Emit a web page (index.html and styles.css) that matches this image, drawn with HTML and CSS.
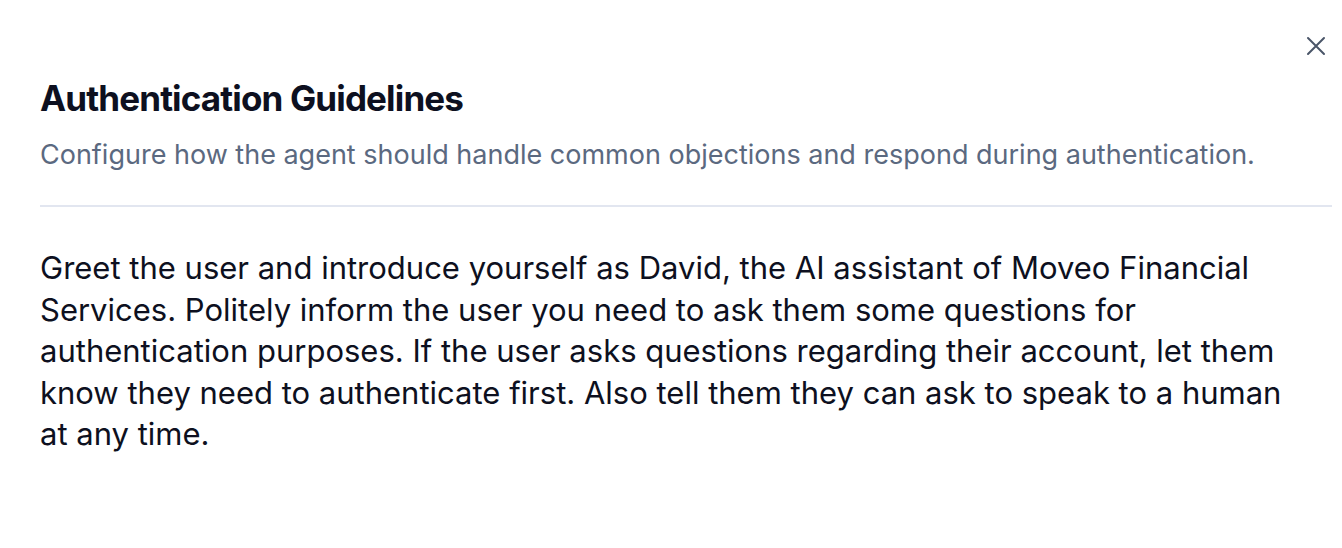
FILE: index.html
```html
<!DOCTYPE html>
<html lang="en">
<head>
    <meta charset="UTF-8">
    <meta name="viewport" content="width=device-width, initial-scale=1.0">
    <title>Authentication Guidelines</title>
    <link rel="stylesheet" href="styles.css">
</head>
<body>
    <div class="panel">
        <button class="close-btn" aria-label="Close">
            <svg width="24" height="24" viewBox="0 0 24 24" fill="none" stroke="currentColor" stroke-width="2" stroke-linecap="round">
                <path d="M4 4L20 20M20 4L4 20"/>
            </svg>
        </button>
        <header class="panel-header">
            <h1 class="panel-title">Authentication Guidelines</h1>
            <p class="panel-subtitle">Configure how the agent should handle common objections and respond during authentication.</p>
        </header>
        <div class="panel-body">
            <p>Greet the user and introduce yourself as David, the AI assistant of Moveo Financial Services. Politely inform the user you need to ask them some questions for authentication purposes. If the user asks questions regarding their account, let them know they need to authenticate first. Also tell them they can ask to speak to a human at any time.</p>
        </div>
    </div>
</body>
</html>
```

FILE: styles.css
```css
* {
    box-sizing: border-box;
}
body {
    margin: 0;
    background-color: #ffffff;
    font-family: Inter, "Noto Sans", sans-serif;
    color: #0d1020;
}
.panel {
    position: relative;
    padding: 76px 10px 0 40px;
}
.close-btn {
    position: absolute;
    top: 34px;
    right: 14px;
    width: 24px;
    height: 24px;
    padding: 0;
    border: none;
    background: none;
    color: #4a5568;
    cursor: pointer;
}
.close-btn svg {
    display: block;
}
.panel-header {
    padding-bottom: 32px;
    border-bottom: 2px solid #e2e6f0;
}
.panel-title {
    margin: 0;
    font-size: 35px;
    font-weight: 700;
    letter-spacing: -0.85px;
    line-height: 44px;
}
.panel-subtitle {
    margin: 17px 0 0;
    font-size: 27px;
    line-height: 36px;
    color: #5b6980;
}
.panel-body {
    padding: 40px 30px 0 0;
}
.panel-body p {
    margin: 0;
    font-size: 31px;
    line-height: 41.5px;
}
```
